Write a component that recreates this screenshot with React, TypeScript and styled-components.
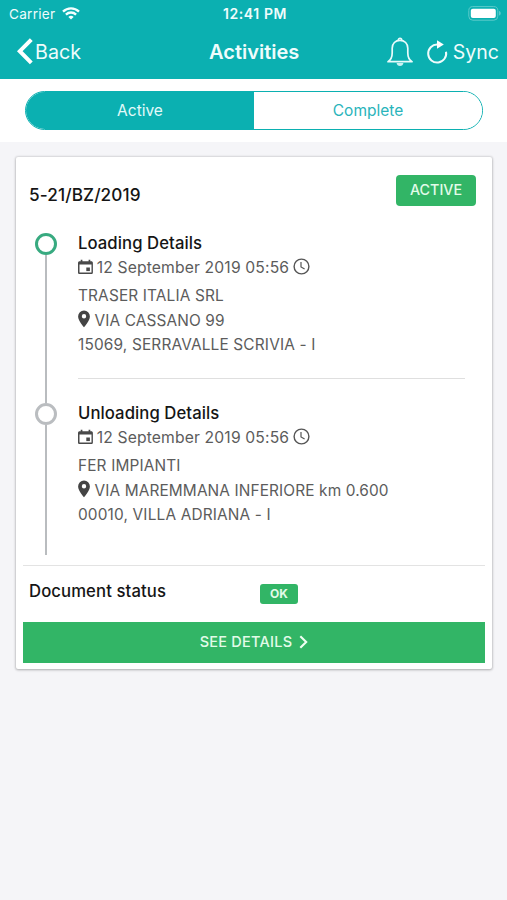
import React from "react";
import styled, { createGlobalStyle } from "styled-components";

const TEAL = "#0bb0b1";
const GREEN = "#32b566";

const GlobalStyle = createGlobalStyle`
  * { box-sizing: border-box; }
  body {
    margin: 0;
    background: #f5f5f8;
    font-family: Inter, "Liberation Sans", sans-serif;
    color: #151515;
  }
`;

const Screen = styled.div`
  width: 507px;
  height: 900px;
  overflow: hidden;
  background: #f5f5f8;
`;

const Header = styled.header`
  height: 79px;
  background: ${TEAL};
  color: #effcfc;
`;

const StatusBar = styled.div`
  height: 27px;
  padding: 0 6px 0 9px;
  display: grid;
  grid-template-columns: 1fr auto 1fr;
  align-items: center;
`;

const Cluster = styled.div<{ $end?: boolean; $gap?: number }>`
  display: flex;
  align-items: center;
  justify-content: ${(p) => (p.$end ? "flex-end" : "flex-start")};
  gap: ${(p) => p.$gap ?? 0}px;
`;

const Label = styled.span<{ $size: number; $weight?: number; $track?: number }>`
  font-size: ${(p) => p.$size}px;
  font-weight: ${(p) => p.$weight ?? 400};
  letter-spacing: ${(p) => p.$track ?? 0}px;
  white-space: nowrap;
`;

const NavBar = styled.nav`
  height: 49px;
  padding: 0 8px 0 16px;
  display: grid;
  grid-template-columns: 193px 1fr auto;
  align-items: center;
`;

const SegmentBar = styled.div`
  height: 63px;
  padding: 12px 24px 0 25px;
  background: #fff;
`;

const Segments = styled.div`
  height: 39px;
  display: flex;
  overflow: hidden;
  border: 1px solid ${TEAL};
  border-radius: 20px;
`;

const Segment = styled.button<{ $active?: boolean }>`
  flex: 1;
  padding: 0;
  border: 0;
  font-family: inherit;
  background: ${(p) => (p.$active ? TEAL : "#fff")};
  color: ${(p) => (p.$active ? "#e3fafa" : "#29b4bb")};
`;

const Card = styled.article`
  width: 476px;
  height: 512px;
  margin: 15px 0 0 16px;
  padding: 0 7px;
  background: #fff;
  border-radius: 2px;
  box-shadow: 0 0 2px 1px rgba(0, 0, 0, 0.1), 0 1px 3px rgba(0, 0, 0, 0.22);
`;

const CardHeader = styled.div`
  height: 76px;
  padding: 18px 9px 0 6px;
  display: flex;
  justify-content: space-between;
  align-items: flex-start;
`;

const CardTitle = styled.h2`
  margin: 9px 0 0;
  font-size: 17.2px;
  line-height: 21px;
  font-weight: 500;
  letter-spacing: 0.1px;
`;

const StateBadge = styled.span`
  width: 80px;
  height: 31px;
  margin-top: -0.5px;
  padding-bottom: 1px;
  display: flex;
  align-items: center;
  justify-content: center;
  border-radius: 4px;
  background: ${GREEN};
  color: #e2fbe9;
`;

const Step = styled.section<{ $height: number }>`
  height: ${(p) => p.$height}px;
  padding: 0 20px 0 12px;
  display: grid;
  grid-template-columns: 22px 1fr;
  column-gap: 21px;
`;

const Rail = styled.div`
  display: flex;
  flex-direction: column;
  align-items: center;
`;

const Dot = styled.span<{ $color: string }>`
  width: 22px;
  height: 22px;
  flex: none;
  border: 3.5px solid ${(p) => p.$color};
  border-radius: 50%;
`;

const RailLine = styled.span`
  width: 2.5px;
  flex: 1;
  background: #b9bcbf;
`;

const StepBody = styled.div<{ $divided?: boolean }>`
  height: 146px;
  border-bottom: ${(p) => (p.$divided ? "1px solid #dfdfdf" : "0")};
`;

const StepTitle = styled.h3`
  margin: 0;
  height: 21px;
  line-height: 20px;
  font-size: 16px;
  font-weight: 500;
`;

const Line = styled.div<{ $height: number; $gap?: number }>`
  height: ${(p) => p.$height}px;
  display: flex;
  align-items: center;
  gap: ${(p) => p.$gap ?? 0}px;
  color: #5c5c5c;

  svg {
    margin-bottom: 2px;
  }
`;

const StatusRow = styled.div`
  height: 57px;
  margin-top: 10px;
  padding: 0 6px;
  border-top: 1px solid #e3e3e3;
  display: grid;
  grid-template-columns: 231px auto;
  justify-content: start;
  align-items: start;
`;

const StatusTitle = styled.span`
  margin-top: 14px;
  line-height: 22px;
  font-size: 16.7px;
  font-weight: 500;
  letter-spacing: 0.1px;
`;

const OkBadge = styled.span`
  width: 38px;
  height: 20px;
  margin-top: 17.5px;
  padding-bottom: 1px;
  display: flex;
  align-items: center;
  justify-content: center;
  border-radius: 3px;
  background: ${GREEN};
  color: #e2fbe9;
`;

const DetailsButton = styled.button`
  width: 100%;
  height: 41px;
  padding: 0 0 2px;
  border: 0;
  display: flex;
  align-items: center;
  justify-content: center;
  gap: 7px;
  font-family: inherit;
  background: ${GREEN};
  color: #e2fbe9;
`;

const WifiIcon = () => (
  <svg width="18" height="13" viewBox="0 0 18 13" fill="none" stroke="#f4ffff" strokeWidth="2.3">
    <path d="M1 4.6C5.5.2 12.5.2 17 4.6" />
    <path d="M3.9 7.6c2.9-2.8 7.3-2.8 10.2 0" />
    <path d="M9 12.4 6.4 9.9c1.5-1.4 3.7-1.4 5.2 0z" fill="#f4ffff" stroke="none" />
  </svg>
);

const BatteryIcon = () => (
  <svg width="33" height="15" viewBox="0 0 33 15">
    <rect x=".8" y=".6" width="29" height="13.6" rx="4" fill="none" stroke="#5ccaca" strokeWidth="1" />
    <rect x="2.8" y="2.8" width="25" height="9.2" rx="2" fill="#fff" />
    <path d="M31.2 5v4.6c1-.4 1.400-1.200 1.400-2.300S32.200 5.400 31.200 5z" fill="#70d0d1" />
  </svg>
);

const BackIcon = () => (
  <svg width="19" height="27" viewBox="0 0 19 27" fill="none" stroke="#fff" strokeWidth="4">
    <path d="M15.300 1.600 3.800 13.200l11.500 11.600" strokeLinejoin="miter" />
  </svg>
);

const BellIcon = () => (
  <svg width="26" height="30" viewBox="0 0 26 30" fill="none" stroke="#e8fbfb" strokeWidth="1.700">
    <path d="M1 24.700c3.100-2.100 4.200-4.200 4.200-8.700V11.200C5.200 6.600 8.400 3.300 13 3.300s7.800 3.300 7.800 7.900V16c0 4.500 1.100 6.600 4.200 8.700z" strokeLinejoin="round" />
    <path d="M11.300 3.200c0-2.600 3.400-2.600 3.400 0" />
    <path d="M9.600 26.100c.2 1.800 1.500 2.900 3.400 2.900s3.200-1.100 3.400-2.900z" fill="#c9f2f2" stroke="none" />
  </svg>
);

const SyncIcon = () => (
  <svg width="22" height="24" viewBox="0 0 22 24" fill="none" stroke="#effcfc" strokeWidth="2">
    <path d="M20 11.700A9 9 0 1 1 11.400 4.500" />
    <path d="M11 .3 17.800 4.500 11 8.700z" fill="#fff" stroke="none" />
  </svg>
);

const CalendarIcon = () => (
  <svg width="15" height="16" viewBox="0 0 15 16">
    <path d="M2.700.8h1.700v1.500h6.200V.8h1.700v1.500h.9c1 0 1.700.7 1.700 1.600v9.500c0 .9-.7 1.600-1.700 1.600H1.700C.7 15 0 14.300 0 13.400V3.900C0 3 .7 2.300 1.700 2.300h1zM1.500 5.600v7.900h12V5.600z" fill="#494949" fillRule="evenodd" />
    <path d="M8.300 8.500h3.600v3.600H8.300z" fill="#494949" />
  </svg>
);

const ClockIcon = () => (
  <svg width="17" height="17" viewBox="0 0 17 17" fill="none" stroke="#555" strokeWidth="1.400">
    <circle cx="8.500" cy="8.500" r="7.400" />
    <path d="M8 3.900v5l3.600 2.200" strokeWidth="1.200" />
  </svg>
);

const PinIcon = () => (
  <svg width="12" height="18" viewBox="0 0 12 18">
    <path d="M6 .5A5.900 5.900 0 0 0 .1 6.400C.1 10.500 6 17.300 6 17.300s5.900-6.800 5.900-10.900A5.900 5.900 0 0 0 6 .5zm0 3.600a2.200 2.200 0 1 1 0 4.400 2.200 2.200 0 0 1 0-4.400z" fill="#444" fillRule="evenodd" />
  </svg>
);

const ChevronIcon = () => (
  <svg width="9" height="14" viewBox="0 0 9 14" fill="none" stroke="#effff3" strokeWidth="2.100">
    <path d="M1.300 1.200 7.200 7l-5.900 5.800" />
  </svg>
);

type Stop = {
  title: string;
  company: string;
  street: string;
  city: string;
  color: string;
  height: number;
};

const stops: Stop[] = [
  {
    title: "Loading Details",
    company: "TRASER ITALIA SRL",
    street: "VIA CASSANO 99",
    city: "15069, SERRAVALLE SCRIVIA - I",
    color: "#38aa80",
    height: 170,
  },
  {
    title: "Unloading Details",
    company: "FER IMPIANTI",
    street: "VIA MAREMMANA INFERIORE km 0.600",
    city: "00010, VILLA ADRIANA - I",
    color: "#babdc0",
    height: 152,
  },
];

const StopStep = ({ stop, divided }: { stop: Stop; divided: boolean }) => (
  <Step $height={stop.height}>
    <Rail>
      <Dot $color={stop.color} />
      <RailLine />
    </Rail>
    <StepBody $divided={divided}>
      <StepTitle>
        <Label $size={16.7} $weight={500} $track={0.07}>{stop.title}</Label>
      </StepTitle>
      <Line $height={27} $gap={3.7}>
        <CalendarIcon />
        <Label $size={15.7} $track={0.14}>12 September 2019 05:56</Label>
        <ClockIcon />
      </Line>
      <Line $height={28}>
        <Label $size={15.4} $track={0.14}>{stop.company}</Label>
      </Line>
      <Line $height={22} $gap={4.5}>
        <PinIcon />
        <Label $size={15.4} $track={0.12}>{stop.street}</Label>
      </Line>
      <Line $height={26}>
        <Label $size={15.4} $track={0.16}>{stop.city}</Label>
      </Line>
    </StepBody>
  </Step>
);

export default function App() {
  return (
    <Screen>
      <GlobalStyle />
      <Header>
        <StatusBar>
          <Cluster $gap={6.5}>
            <Label $size={13.6} $track={0.25}>Carrier</Label>
            <WifiIcon />
          </Cluster>
          <Label $size={14} $weight={600} $track={0.6}>12:41 PM</Label>
          <Cluster $end>
            <BatteryIcon />
          </Cluster>
        </StatusBar>
        <NavBar>
          <Cluster>
            <BackIcon />
            <Label $size={19.7}>Back</Label>
          </Cluster>
          <Label $size={20} $weight={600}>Activities</Label>
          <Cluster $end $gap={5}>
            <Cluster $gap={13}>
              <BellIcon />
              <SyncIcon />
            </Cluster>
            <Label $size={19.5}>Sync</Label>
          </Cluster>
        </NavBar>
      </Header>
      <SegmentBar>
        <Segments>
          <Segment $active><Label $size={15.500}>Active</Label></Segment>
          <Segment><Label $size={15.500}>Complete</Label></Segment>
        </Segments>
      </SegmentBar>
      <Card>
        <CardHeader>
          <CardTitle>5-21/BZ/2019</CardTitle>
          <StateBadge><Label $size={14.300} $weight={500}>ACTIVE</Label></StateBadge>
        </CardHeader>
        {stops.map((stop, i) => (
          <StopStep key={stop.title} stop={stop} divided={i === 0} />
        ))}
        <StatusRow>
          <StatusTitle>Document status</StatusTitle>
          <OkBadge><Label $size={12} $weight={700}>OK</Label></OkBadge>
        </StatusRow>
        <DetailsButton>
          <Label $size={14.500} $weight={500} $track={0.25}>SEE DETAILS</Label>
          <ChevronIcon />
        </DetailsButton>
      </Card>
    </Screen>
  );
}
